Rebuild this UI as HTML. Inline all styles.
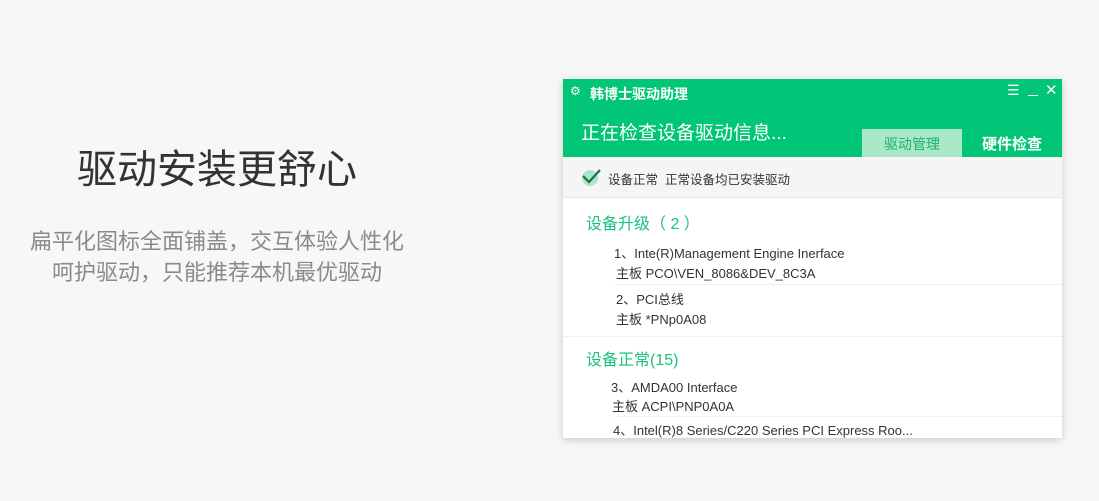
<!DOCTYPE html>
<html><head><meta charset="utf-8"><style>
body{margin:0;width:1099px;height:501px;background:#f7f7f7;font-family:"Liberation Sans","Noto Sans CJK SC",sans-serif;position:relative;overflow:hidden}
.a{position:absolute;white-space:nowrap}
.h1{left:77px;top:137px;font-size:40px;color:#333}
.sub{left:17px;width:400px;text-align:center;font-size:22px;color:#8a8a8a;line-height:31px;top:226px}
.win{position:absolute;left:563px;top:79px;width:499px;height:359px;background:#fff;box-shadow:0 2px 8px rgba(0,0,0,.18);overflow:hidden}
.hd{position:absolute;left:0;top:0;width:499px;height:78px;background:#02c677;color:#fff}
.bar{position:absolute;left:0;top:78px;width:499px;height:40px;background:#f5f5f5;border-bottom:1px solid #e6e6e6}
.g{color:#19c27a;font-size:16px}
.t{font-size:13px;color:#333}
.ln{position:absolute;height:1px;background:#f0f0f0}
</style></head><body>
<div class="a h1">驱动安装更舒心</div>
<div class="a sub">扁平化图标全面铺盖，交互体验人性化<br>呵护驱动，只能推荐本机最优驱动</div>
<div class="win">
 <div class="hd">
  <div class="a" style="left:7px;top:5px;font-size:12px">⚙</div>
  <div class="a" style="left:27px;top:5px;font-size:14px;font-weight:bold">韩博士驱动助理</div>
  <div class="a" style="left:444px;top:3px;font-size:14px">☰</div>
  <div class="a" style="left:465px;top:16px;width:10px;height:1px;background:#fff"></div>
  <div class="a" style="left:482px;top:2px;font-size:15px">✕</div>
  <div class="a" style="left:18px;top:39px;font-size:19px">正在检查设备驱动信息...</div>
  <div class="a" style="left:299px;top:50px;width:100px;height:28px;background:#a8e8c6;color:#1cb070;font-size:14px;text-align:center;line-height:30px">驱动管理</div>
  <div class="a" style="left:419px;top:54px;font-size:15px;font-weight:bold">硬件检查</div>
 </div>
 <div class="bar">
  <svg class="a" style="left:17px;top:10px" width="22" height="20"><circle cx="10" cy="11" r="8" fill="#a8e8c6"/><path d="M3 9l6 6 11-12" stroke="#2a6a48" stroke-width="2.2" fill="none"/></svg>
  <div class="a t" style="left:45px;top:12px;font-size:12.5px">设备正常&nbsp;&nbsp;正常设备均已安装驱动</div>
 </div>
 <div class="a g" style="left:23px;top:131px">设备升级（ 2 ）</div>
 <div class="a t" style="left:51px;top:164px">1、Inte(R)Management Engine Inerface</div>
 <div class="a t" style="left:53px;top:184px">主板 PCO\VEN_8086&amp;DEV_8C3A</div>
 <div class="ln" style="left:52px;top:205px;width:447px"></div>
 <div class="a t" style="left:53px;top:210px">2、PCI总线</div>
 <div class="a t" style="left:53px;top:230px">主板 *PNp0A08</div>
 <div class="ln" style="left:0;top:257px;width:499px"></div>
 <div class="a g" style="left:23px;top:267px">设备正常(15)</div>
 <div class="a t" style="left:48px;top:298px">3、AMDA00 Interface</div>
 <div class="a t" style="left:49px;top:317px">主板 ACPI\PNP0A0A</div>
 <div class="ln" style="left:52px;top:337px;width:447px"></div>
 <div class="a t" style="left:50px;top:341px">4、Intel(R)8 Series/C220 Series PCI Express Roo...</div>
</div>
</body></html>
